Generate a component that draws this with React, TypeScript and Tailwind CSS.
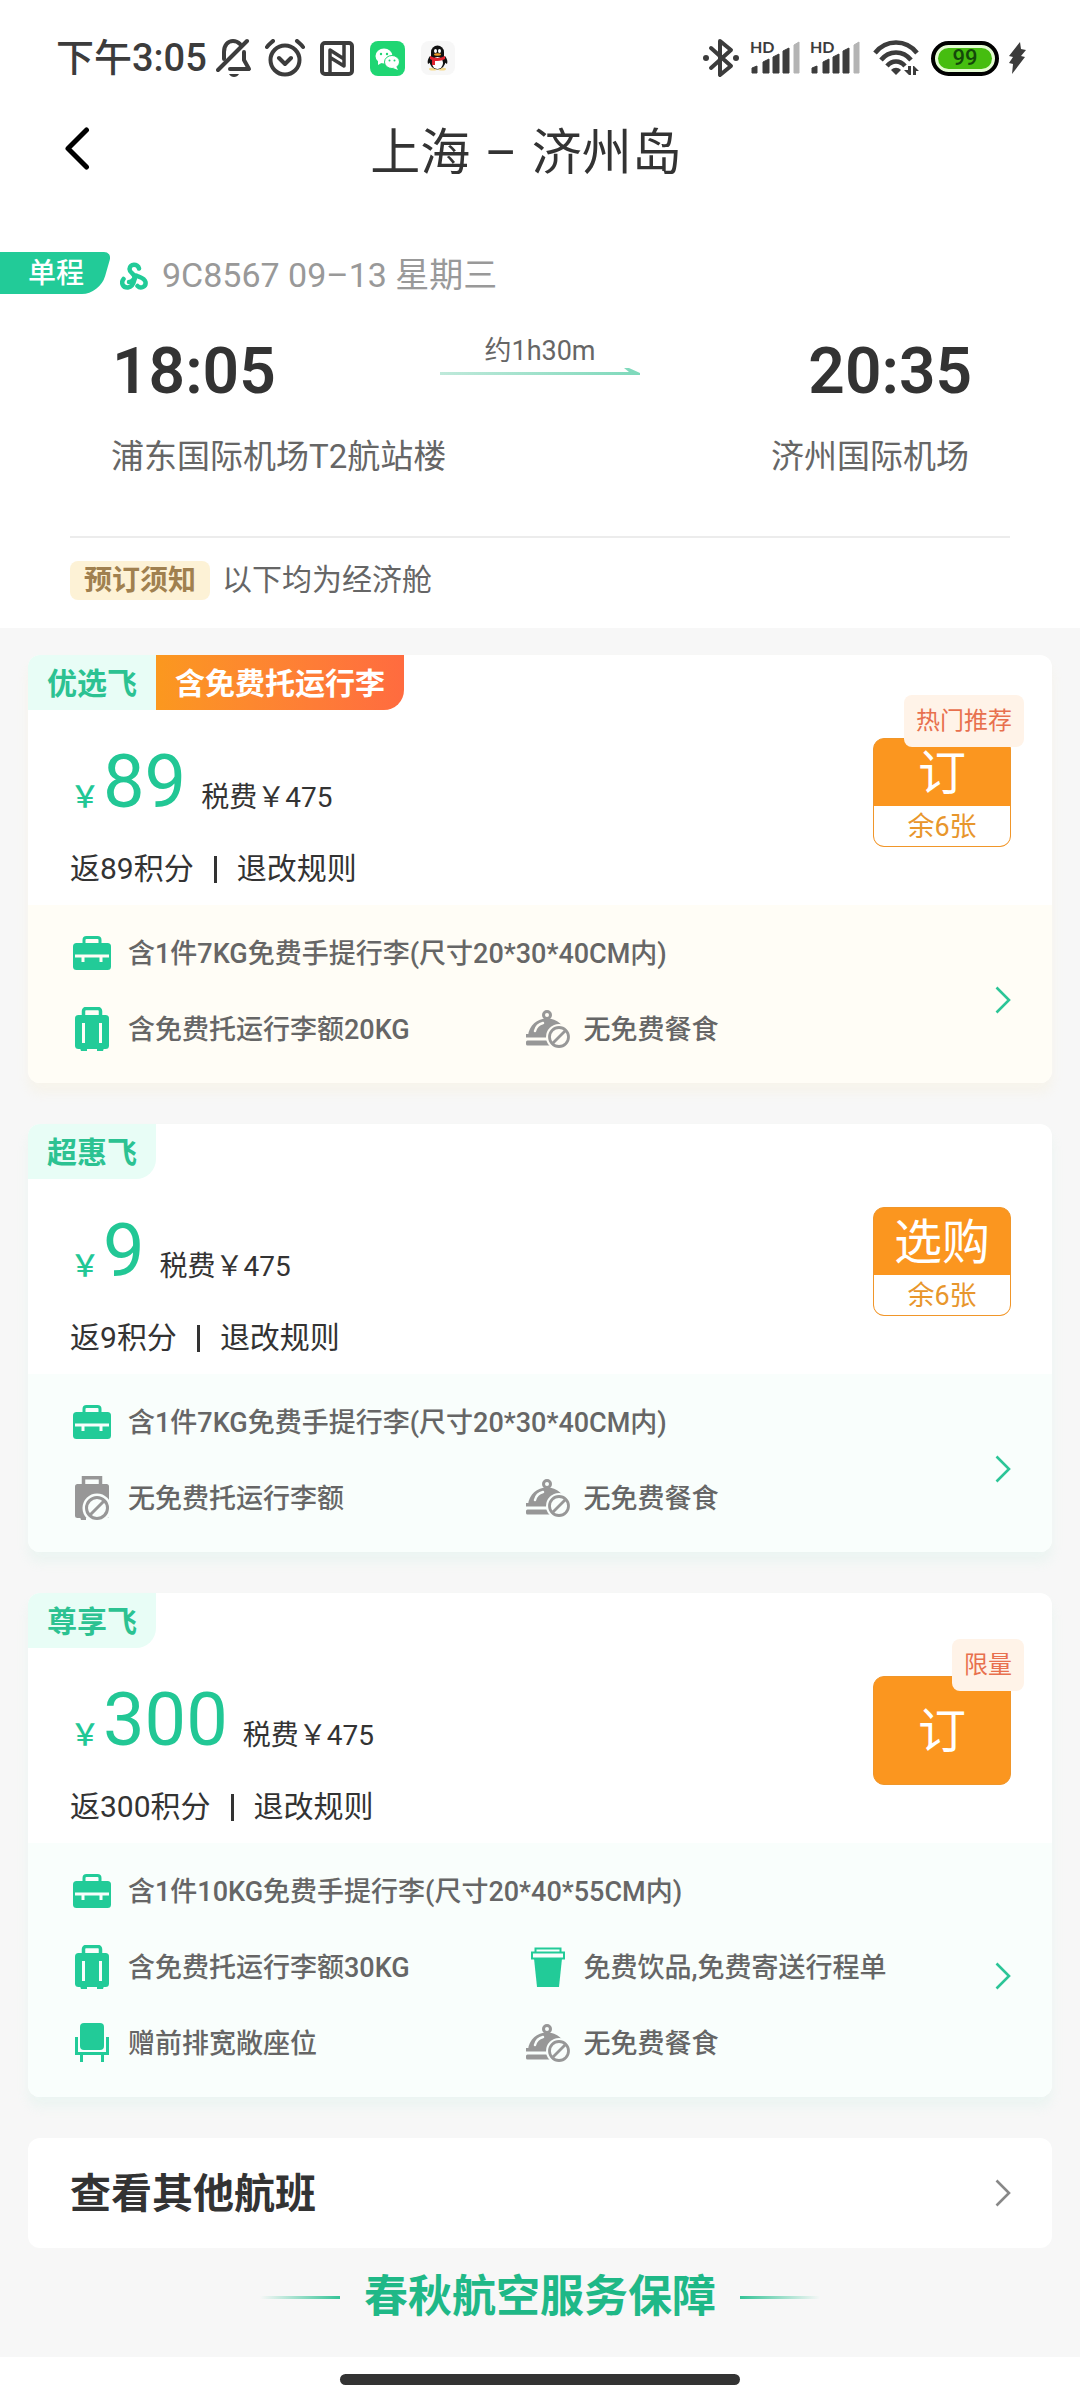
import React from "react";

type IconName = "carry" | "suitcase" | "noSuitcase" | "noMeal" | "cup" | "seat";

interface Perk {
  icon: IconName;
  text: string;
  wide?: boolean;
}

interface Fare {
  name: string;
  promo?: string;
  price: number;
  tax: number;
  action: string;
  left?: string;
  badge?: string;
  warm?: boolean;
  perks: Perk[];
}

const GREEN = "#22cb98";
const GREY = "#979797";
const INK = "#3c3c3c";

const fares: Fare[] = [
  {
    name: "优选飞",
    promo: "含免费托运行李",
    price: 89,
    tax: 475,
    action: "订",
    left: "余6张",
    badge: "热门推荐",
    warm: true,
    perks: [
      { icon: "carry", text: "含1件7KG免费手提行李(尺寸20*30*40CM内)", wide: true },
      { icon: "suitcase", text: "含免费托运行李额20KG" },
      { icon: "noMeal", text: "无免费餐食" },
    ],
  },
  {
    name: "超惠飞",
    price: 9,
    tax: 475,
    action: "选购",
    left: "余6张",
    perks: [
      { icon: "carry", text: "含1件7KG免费手提行李(尺寸20*30*40CM内)", wide: true },
      { icon: "noSuitcase", text: "无免费托运行李额" },
      { icon: "noMeal", text: "无免费餐食" },
    ],
  },
  {
    name: "尊享飞",
    price: 300,
    tax: 475,
    action: "订",
    badge: "限量",
    perks: [
      { icon: "carry", text: "含1件10KG免费手提行李(尺寸20*40*55CM内)", wide: true },
      { icon: "suitcase", text: "含免费托运行李额30KG" },
      { icon: "cup", text: "免费饮品,免费寄送行程单" },
      { icon: "seat", text: "赠前排宽敞座位" },
      { icon: "noMeal", text: "无免费餐食" },
    ],
  },
];

function PerkIcon({ name, paper }: { name: IconName; paper: string }) {
  switch (name) {
    case "carry":
      return (
        <svg width="38" height="34" viewBox="0 0 38 34">
          <path d="M11 8V4a2.500 2.500 0 0 1 2.500-2.500h11A2.500 2.500 0 0 1 27 4v4" fill="none" stroke={GREEN} strokeWidth="3" />
          <rect x="0" y="7" width="38" height="27" rx="3.500" fill={GREEN} />
          <path d="M2 20h34M10 20v6M28 20v6" stroke={paper} strokeWidth="3" fill="none" />
        </svg>
      );
    case "suitcase":
      return (
        <svg width="34" height="44" viewBox="0 0 34 44">
          <path d="M8.500 9V4A2.500 2.500 0 0 1 11 1.500h12A2.500 2.500 0 0 1 25.500 4v5" fill="none" stroke={GREEN} strokeWidth="3.500" />
          <rect x="0" y="8" width="34" height="34" rx="3.500" fill={GREEN} />
          <path d="M5 41h7v3H6zM22 41h7l-1 3h-6z" fill={GREEN} />
          <path d="M8.500 16v20M25.500 16v20" stroke={paper} strokeWidth="3" />
        </svg>
      );
    case "noSuitcase":
      return (
        <svg width="34" height="44" viewBox="0 0 34 44">
          <path d="M8.500 9V1.750h17V9" fill="none" stroke={GREY} strokeWidth="3.500" />
          <rect x="0" y="8" width="34" height="34" rx="2.500" fill={GREY} />
          <path d="M5 41h6v3H6z" fill={GREY} />
          <circle cx="22" cy="32" r="14.500" fill={paper} />
          <circle cx="22" cy="32" r="10.500" fill="none" stroke={GREY} strokeWidth="3" />
          <path d="M15 39l14-14" stroke={GREY} strokeWidth="3" />
        </svg>
      );
    case "noMeal":
      return (
        <svg width="44" height="38" viewBox="0 0 44 38">
          <circle cx="21" cy="5" r="3.500" fill="none" stroke={GREY} strokeWidth="3" />
          <path d="M2 26C3 15 11 8.500 21 8.500S39 15 40 26z" fill={GREY} />
          <path d="M9 21c1-4 4-7 8-8" stroke={paper} strokeWidth="2.500" fill="none" strokeLinecap="round" />
          <rect x="0" y="24" width="40" height="3.500" fill={GREY} />
          <rect x="0" y="30.500" width="34" height="5" rx="1.500" fill={GREY} />
          <circle cx="33" cy="27" r="13" fill={paper} />
          <circle cx="33" cy="27" r="9.500" fill="none" stroke={GREY} strokeWidth="2.800" />
          <path d="M27 33l12-12" stroke={GREY} strokeWidth="2.800" />
        </svg>
      );
    case "cup":
      return (
        <svg width="34" height="40" viewBox="0 0 34 40">
          <path d="M4.500 6V1.500h25V6" fill="none" stroke={GREEN} strokeWidth="2" />
          <rect x="1" y="5.500" width="32" height="6" fill="none" stroke={GREEN} strokeWidth="2" />
          <path d="M3 11.500h28L28 40H6z" fill={GREEN} />
        </svg>
      );
    case "seat":
      return (
        <svg width="34" height="40" viewBox="0 0 34 40">
          <rect x="5" y="0" width="24" height="27" rx="4" fill={GREEN} />
          <path d="M1.500 14v16.500h31V14" fill="none" stroke={GREEN} strokeWidth="3" />
          <path d="M6.500 31v8M27.500 31v8" stroke={GREEN} strokeWidth="3" />
        </svg>
      );
  }
}

function Chevron({ color }: { color: string }) {
  return (
    <svg width="16" height="28" viewBox="0 0 16 28" fill="none" stroke={color} strokeWidth="2.600">
      <path d="M1.500 1.500L14 14 1.500 26.500" />
    </svg>
  );
}

function Signal() {
  return (
    <div className="flex h-[40px] w-[50px] flex-col">
      <span className="h-[16px] font-[Lato] text-[16px] font-bold leading-[18px]">HD</span>
      <svg className="-mt-[14px] shrink-0" width="50" height="34" viewBox="0 0 50 34" fill={INK}>
        <path d="M2 33v-5l5-2v7zM13 33V22l6-3v14zM23 33V17l6-3v19zM33 33V11l6-3v25z" stroke={INK} strokeWidth="1" strokeLinejoin="round" />
        <path d="M44 33V5l5-3v31z" fill="#b4b4b4" stroke="#b4b4b4" strokeWidth="1" strokeLinejoin="round" />
      </svg>
    </div>
  );
}

function StatusBar() {
  return (
    <div className="flex h-[116px] items-center justify-between pl-[56px] pr-[54px] text-[#3c3c3c]">
      <div className="flex items-center">
        <span className="w-[160px] whitespace-nowrap text-[38px] font-medium leading-[44px]">下午3:05</span>
        <svg width="36" height="40" viewBox="0 0 36 40" fill="none" stroke={INK} strokeWidth="4" strokeLinecap="round" strokeLinejoin="round">
          <path d="M8 21v-7C8 7 12 3 17 3c3 0 5 1 7 3M28 14v8l5 9H14" />
          <path d="M2 32L31 3" />
          <path d="M13 36h10c-1 2-3 3-5 3s-4-1-5-3z" fill={INK} stroke="none" />
        </svg>
        <svg className="ml-[13px]" width="40" height="38" viewBox="0 0 40 38" fill="none" stroke={INK} strokeWidth="4" strokeLinecap="round" strokeLinejoin="round">
          <circle cx="20" cy="21" r="14.500" />
          <path d="M2 8c2-3 4-4 6-6M38 8c-2-3-4-4-6-6M14 19l6 6 6-6" />
        </svg>
        <svg className="ml-[15px]" width="34" height="35" viewBox="0 0 34 35" fill="none" stroke={INK} strokeWidth="4" strokeLinecap="round" strokeLinejoin="round">
          <rect x="2" y="2" width="30" height="31" rx="3" />
          <path d="M10 32V9l14 9M24 3v22l-13-8" strokeWidth="3.500" />
        </svg>
        <svg className="ml-[16px]" width="35" height="35" viewBox="0 0 35 35">
          <rect width="35" height="35" rx="8" fill="#1fd673" />
          <ellipse cx="14" cy="15" rx="8.500" ry="7.500" fill="#fff" />
          <path d="M8 19l0 5 5-3z" fill="#fff" />
          <ellipse cx="22" cy="21" rx="7.500" ry="6.500" fill="#fff" stroke="#1fd673" strokeWidth="1" />
          <path d="M26 25l2 4-5-2z" fill="#fff" />
          <g fill="#1fd673">
            <circle cx="11" cy="13" r="1.200" />
            <circle cx="17" cy="13" r="1.200" />
            <circle cx="19.500" cy="19.500" r="1" />
            <circle cx="24.500" cy="19.500" r="1" />
          </g>
        </svg>
        <svg className="ml-[16px]" width="34" height="34" viewBox="0 0 34 34">
          <rect width="34" height="34" rx="8" fill="#f7f7f7" />
          <ellipse cx="12" cy="28" rx="4" ry="1.500" fill="#f5d98a" />
          <ellipse cx="21" cy="28" rx="4" ry="1.500" fill="#f5d98a" />
          <path d="M9 15c-2 3-3 5-2 8l3-2M24 15c2 3 3 5 2 8l-3-2z" fill="#111" />
          <ellipse cx="16.500" cy="20" rx="8" ry="8.500" fill="#111" />
          <ellipse cx="16.500" cy="22" rx="5.500" ry="6" fill="#fff" />
          <path d="M10 15V11a6.500 6.500 0 0 1 13 0v4z" fill="#111" />
          <path d="M9 15c5 2.500 10 2.500 15 0v3c-4 2-7 2-10 2v4h-3v-5l-2-1z" fill="#e0232e" />
          <ellipse cx="14.500" cy="10" rx="1.500" ry="2" fill="#fff" />
          <ellipse cx="18.500" cy="10" rx="1.500" ry="2" fill="#fff" />
          <ellipse cx="16.500" cy="13.500" rx="3.500" ry="1.200" fill="#f0a02c" />
        </svg>
      </div>
      <div className="flex items-center">
        <svg width="36" height="40" viewBox="0 0 36 40" fill="none" stroke={INK} strokeWidth="4" strokeLinejoin="round" strokeLinecap="round">
          <path d="M8 10l20 18-11 9V3l11 9L8 30" />
          <circle cx="3" cy="20" r="3" fill={INK} stroke="none" />
          <circle cx="33" cy="20" r="3" fill={INK} stroke="none" />
        </svg>
        <div className="ml-[11px] flex gap-[10px]">
          <Signal />
          <Signal />
        </div>
        <svg className="ml-[13px]" width="46" height="36" viewBox="0 0 46 36">
          <g fill="none" stroke={INK} strokeWidth="4.500">
            <path d="M2 13C13-1 33-1 44 13M8 20c8-10 22-10 30 0M14 26c5-6 13-6 18 0" />
          </g>
          <path d="M18 30c3-3 7-3 10 0l-5 5z" fill={INK} />
          <path d="M35 26h3v9h-2l-5-5h4zM40 35v-9h1l5 5h-3v4z" fill={INK} />
        </svg>
        <div className="ml-[12px] flex h-[35px] w-[68px] items-center rounded-full border-4 border-black bg-[#e3fbd2] p-[3px]">
          <span className="flex h-full w-full items-center justify-center rounded-full bg-[#46bd10] text-[22px] font-medium leading-[22px] text-[#14470a]">99</span>
        </div>
        <svg className="ml-[9px]" width="18" height="32" viewBox="0 0 18 32" fill={INK}>
          <path d="M12 0L1 14l4 1-4 6 4 1-1 10L17 15l-4-1 5-6-5-1z" />
        </svg>
      </div>
    </div>
  );
}

function FlightSummary() {
  return (
    <section className="pb-[28px] pt-[68px]">
      <div className="flex h-[42px] items-center">
        <span className="relative isolate flex h-full w-[112px] items-center pl-[28px] pt-[2px] text-[28px] font-medium text-white before:absolute before:inset-y-0 before:-left-4 before:right-[6px] before:-z-10 before:-skew-x-[16deg] before:rounded-br-[18px] before:rounded-tr-[8px] before:bg-[#22cb98]">
          单程
        </span>
        <svg className="ml-[8px] mt-[6px] shrink-0" width="28" height="28" viewBox="0 0 28 28" fill="none" stroke={GREEN} strokeWidth="4.500" strokeLinecap="round">
          <path d="M19 6.500C18 1.500 9.500 1.500 9.500 7c0 5 6.500 4 5 10.500C13.500 22 12 25 8 25.500c-5 .3-7.500-4.500-4.500-8.500" />
          <path d="M9 20c3 0 3.500-2 5.500-3.500M16 13.500c2.500 1.500 8.500 2 9.500 6.500.8 5-5 7-8 4" />
        </svg>
        <span className="ml-[14px] pt-1 text-[34px] leading-[42px] text-[#999]">9C8567 09–13 星期三</span>
      </div>
      <div className="grid grid-cols-[1fr_200px_1fr] px-[108px] pt-[44px] text-[#333]">
        <time className="pl-1 text-[64px] font-semibold leading-[68px]">18:05</time>
        <div className="flex flex-col items-center text-[27px] leading-[26px] text-[#666]">
          约1h30m
          <svg className="mt-[2px] w-full" height="10" viewBox="0 0 200 10" preserveAspectRatio="none">
            <defs>
              <linearGradient id="route" x1="0" x2="1">
                <stop offset="0" stopColor="#bfe9da" />
                <stop offset="1" stopColor="#7ed9bb" />
              </linearGradient>
            </defs>
            <path d="M0 6h189l-5-4h5l11 5v2H0z" fill="url(#route)" />
          </svg>
        </div>
        <time className="text-right text-[64px] font-semibold leading-[68px]">20:35</time>
      </div>
      <div className="flex justify-between px-[111px] pt-[31px] text-[33px] leading-[40px] text-[#666]">
        <span>浦东国际机场T2航站楼</span>
        <span>济州国际机场</span>
      </div>
      <div className="mx-[70px] mt-[59px] flex items-center gap-[12px] border-t-2 border-[#ececec] pt-[22px]">
        <button className="h-[39px] rounded-lg bg-[#fdf2d6] px-[14px] text-[28px] font-bold leading-[40px] text-[#a0804f]">预订须知</button>
        <span className="text-[30px] leading-[40px] text-[#666]">以下均为经济舱</span>
      </div>
    </section>
  );
}

function BookButton({ fare }: { fare: Fare }) {
  return (
    <div className="relative mt-[28px] h-[109px] w-[138px] shrink-0">
      <button className="flex h-full w-full flex-col overflow-hidden rounded-[11px] border border-[#f0962a] bg-[#fb961f]">
        <span className="flex w-full grow items-center justify-center pt-[3px] text-[48px] leading-[48px] text-white">{fare.action}</span>
        {fare.left && (
          <span className="h-[40px] w-full bg-white text-center text-[27px] leading-[42px] text-[#e8962c]">{fare.left}</span>
        )}
      </button>
      {fare.badge && (
        <span
          className={
            fare.left
              ? "absolute -right-[13px] -top-[43px] whitespace-nowrap rounded-lg bg-[#fff3e8] px-[12px] text-[24px] leading-[52px] text-[#e8704e]"
              : "absolute -right-[13px] -top-[37px] whitespace-nowrap rounded-lg bg-[#fff3e8] px-[12px] text-[24px] leading-[52px] text-[#e8704e]"
          }
        >
          {fare.badge}
        </span>
      )}
    </div>
  );
}

function FareCard({ fare }: { fare: Fare }) {
  const paper = fare.warm ? "#fffdf6" : "#f9fefc";
  return (
    <article
      className={
        fare.warm
          ? "overflow-hidden rounded-xl bg-white shadow-[0_10px_12px_rgba(250,225,170,0.14)]"
          : "overflow-hidden rounded-xl bg-white shadow-[0_10px_12px_rgba(170,235,215,0.14)]"
      }
    >
      <div className="flex h-[55px] text-[30px] font-bold leading-[57px]">
        <h2 className={fare.promo ? "bg-[#e8fdf6] px-[19px] text-[#2cc292]" : "rounded-br-[20px] bg-[#e8fdf6] px-[19px] text-[#2cc292]"}>
          {fare.name}
        </h2>
        {fare.promo && (
          <span className="rounded-br-[20px] bg-gradient-to-r from-[#fb981e] to-[#ff6b3f] px-[19px] text-white">{fare.promo}</span>
        )}
      </div>
      <div className="flex items-start justify-between pl-[42px] pr-[41px]">
        <div className="pb-[16px] pt-[35px]">
          <div className="flex items-baseline text-[#22c795]">
            <span className="text-[30px] font-medium leading-[30px]">￥</span>
            <span className="ml-[3px] text-[74px] leading-[74px]">{fare.price}</span>
            <span className="ml-[15px] text-[28px] leading-[28px] text-[#333]">税费￥{fare.tax}</span>
          </div>
          <div className="mt-[30px] flex items-center text-[30px] leading-[40px] text-[#333]">
            <span>返{fare.price}积分</span>
            <span className="mx-[20px] h-[27px] w-[3px] bg-[#333]" />
            <button>退改规则</button>
          </div>
        </div>
        <BookButton fare={fare} />
      </div>
      <div className={fare.warm ? "relative bg-[#fffdf6] pb-[16px] pl-[42px] pr-[42px] pt-[10px]" : "relative bg-[#f9fefc] pb-[16px] pl-[42px] pr-[42px] pt-[10px]"}>
        <ul className="grid grid-cols-[456fr_485fr]">
          {fare.perks.map((perk) => (
            <li
              key={perk.text}
              className={
                perk.wide
                  ? "col-span-2 flex h-[76px] items-center gap-[14px] whitespace-nowrap text-[27px] font-medium text-[#666]"
                  : "flex h-[76px] items-center gap-[14px] whitespace-nowrap text-[27px] font-medium text-[#666]"
              }
            >
              <span className="flex w-[44px] shrink-0 justify-center">
                <PerkIcon name={perk.icon} paper={paper} />
              </span>
              <span className="pt-[2px] leading-[36px]">{perk.text}</span>
            </li>
          ))}
        </ul>
        <button aria-label="详情" className="absolute inset-y-0 right-[41px] flex items-center pt-3">
          <Chevron color="#2cc597" />
        </button>
      </div>
    </article>
  );
}

export default function App() {
  return (
    <div className="min-h-screen bg-white font-['Roboto','Noto_Sans_CJK_SC',sans-serif]">
      <StatusBar />
      <header className="relative flex h-[68px] items-center justify-center pt-[5px]">
        <button aria-label="返回" className="absolute left-[64px] top-[10px]">
          <svg width="26" height="46" viewBox="0 0 26 46" fill="none" stroke="#000" strokeWidth="5" strokeLinecap="round" strokeLinejoin="round">
            <path d="M22.500 4L4 22.500 22.500 41" />
          </svg>
        </button>
        <h1 className="mr-[28px] text-[50px] leading-[60px] text-[#333]">
          上海 <span className="mx-0.5">–</span> 济州岛
        </h1>
      </header>
      <FlightSummary />
      <main className="bg-[#f7f7f7] px-[28px] pb-[28px] pt-[27px]">
        <div className="flex flex-col gap-[41px]">
          {fares.map((fare) => (
            <FareCard key={fare.name} fare={fare} />
          ))}
          <button className="flex h-[110px] items-center justify-between rounded-xl bg-white pl-[42px] pr-[41px] text-left text-[41px] font-bold text-[#333]">
            <span className="pt-[3px]">查看其他航班</span>
            <Chevron color="#888" />
          </button>
        </div>
        <div className="mt-[17px] flex items-center justify-center gap-[24px]">
          <span className="h-[3px] w-[80px] bg-gradient-to-r from-transparent to-[#35c397]" />
          <h2 className="text-[44px] font-bold leading-[64px] text-[#1fb887]">春秋航空服务保障</h2>
          <span className="h-[3px] w-[80px] bg-gradient-to-l from-transparent to-[#35c397]" />
        </div>
      </main>
      <footer className="flex h-[44px] justify-center pt-[17px]">
        <span className="h-[11px] w-[400px] rounded-full bg-[#333]" />
      </footer>
    </div>
  );
}
